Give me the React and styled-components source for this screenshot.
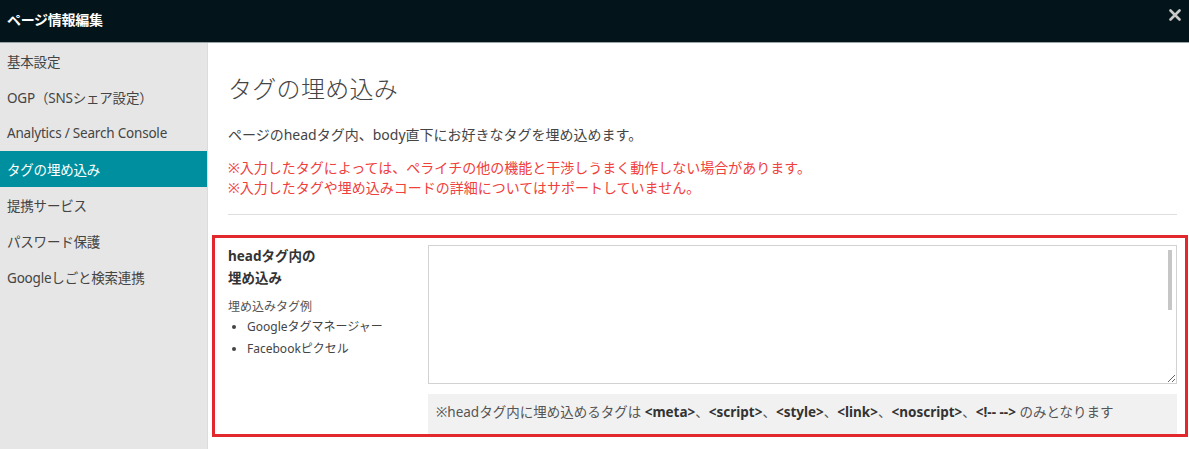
import React from 'react'
import styled, { createGlobalStyle } from 'styled-components'

const GlobalStyle = createGlobalStyle`
  html, body {
    margin: 0;
    padding: 0;
    background: #fff;
  }
  body {
    font-family: "Noto Sans", "Noto Sans CJK JP", sans-serif;
    color: #333;
  }
  * {
    box-sizing: border-box;
  }
`

const menuItems = [
  '基本設定',
  'OGP（SNSシェア設定）',
  'Analytics / Search Console',
  'タグの埋め込み',
  '提携サービス',
  'パスワード保護',
  'Googleしごと検索連携',
]

const App = () => {
  return (
    <Modal>
      <GlobalStyle />
      <Header>
        <Title>ページ情報編集</Title>
        <CloseButton aria-label="閉じる">
          <svg width="12" height="12" viewBox="0 0 12 12">
            <path d="M1.5 1.5 L10.5 10.5 M10.5 1.5 L1.5 10.5" stroke="#c8c8c8" strokeWidth="2.6" strokeLinecap="round" />
          </svg>
        </CloseButton>
      </Header>
      <Body>
        <SideBar>
          {menuItems.map((item) => (
            <MenuItem key={item} active={item === 'タグの埋め込み'}>
              {item}
            </MenuItem>
          ))}
        </SideBar>
        <Content>
          <PageTitle>タグの埋め込み</PageTitle>
          <Lead>ページのheadタグ内、body直下にお好きなタグを埋め込めます。</Lead>
          <Warning>
            ※入力したタグによっては、ペライチの他の機能と干渉しうまく動作しない場合があります。
            <br />
            ※入力したタグや埋め込みコードの詳細についてはサポートしていません。
          </Warning>
          <Divider />
          <FormRow>
            <LabelColumn>
              <FieldLabel>
                headタグ内の
                <br />
                埋め込み
              </FieldLabel>
              <ExampleTitle>埋め込みタグ例</ExampleTitle>
              <ExampleList>
                <li>Googleタグマネージャー</li>
                <li>Facebookピクセル</li>
              </ExampleList>
            </LabelColumn>
            <FieldColumn>
              <InputWrap>
                <TagInput />
                <ScrollThumb />
              </InputWrap>
              <Note>
                ※headタグ内に埋め込めるタグは <b>&lt;meta&gt;</b>、<b>&lt;script&gt;</b>、<b>&lt;style&gt;</b>、<b>&lt;link&gt;</b>、<b>&lt;noscript&gt;</b>、<b>&lt;!-- --&gt;</b> のみとなります
              </Note>
            </FieldColumn>
          </FormRow>
        </Content>
      </Body>
    </Modal>
  )
}

export default App

const Modal = styled.div`
  width: 1189px;
  height: 449px;
  display: flex;
  flex-direction: column;
  overflow: hidden;
`

const Header = styled.header`
  height: 43px;
  flex: none;
  background: #03151a;
  border-bottom: 1px solid #9aa3a5;
  display: flex;
  align-items: center;
  justify-content: space-between;
  padding: 0 8px 4px 7px;
`

const Title = styled.h1`
  margin: 0;
  color: #fff;
  font-size: 14px;
  font-weight: 700;
  letter-spacing: -0.3px;
`

const CloseButton = styled.button`
  border: none;
  background: none;
  padding: 0;
  margin-top: -8px;
  display: flex;
  cursor: pointer;
`

const Body = styled.div`
  flex: 1;
  display: flex;
  min-height: 0;
`

const SideBar = styled.nav`
  width: 208px;
  flex: none;
  background: #e6e6e6;
  border-right: 1px solid #dcdcdc;
`

const MenuItem = styled.div`
  height: 36px;
  display: flex;
  align-items: center;
  padding-left: 7px;
  font-size: 13.5px;
  letter-spacing: -0.2px;
  color: ${(p) => (p.active ? '#fff' : '#444')};
  background: ${(p) => (p.active ? '#008f9e' : 'transparent')};
`

const Content = styled.main`
  flex: 1;
  padding: 28px 12px 0 20px;
  min-width: 0;
`

const PageTitle = styled.h2`
  margin: 0;
  font-size: 24px;
  line-height: 36px;
  font-weight: 300;
  color: #444;
  letter-spacing: 0.3px;
`

const Lead = styled.p`
  margin: 18px 0 0;
  font-size: 14px;
  line-height: 20px;
  color: #444;
`

const Warning = styled.p`
  margin: 13px 0 0;
  font-size: 14px;
  line-height: 20px;
  color: #f0403c;
`

const Divider = styled.hr`
  margin: 16px 0 0;
  border: none;
  border-top: 1px solid #dedede;
`

const FormRow = styled.section`
  margin: 20px -11px 0 -16px;
  border: 3px solid #e3282d;
  display: flex;
  gap: 16px;
  padding: 7px 8px 0 13px;
  height: 202px;
  overflow: hidden;
`

const LabelColumn = styled.div`
  width: 184px;
  flex: none;
`

const FieldLabel = styled.h3`
  margin: 0;
  font-size: 13.5px;
  line-height: 22px;
  font-weight: 700;
  color: #333;
`

const ExampleTitle = styled.p`
  margin: 8px 0 0;
  font-size: 12px;
  line-height: 20px;
  color: #555;
`

const ExampleList = styled.ul`
  margin: -1px 0 0;
  padding-left: 19px;
  font-size: 12px;
  line-height: 22px;
  color: #444;

  li::marker {
    font-size: 11px;
  }
`

const FieldColumn = styled.div`
  flex: 1;
  min-width: 0;
  display: flex;
  flex-direction: column;
  gap: 10px;
`

const InputWrap = styled.div`
  position: relative;
  height: 140px;
`

const TagInput = styled.textarea`
  width: 100%;
  height: 100%;
  border: 1px solid #d2d2d2;
  padding: 4px 16px 4px 4px;
  font-size: 13px;
  overflow: hidden;
  display: block;
`

const ScrollThumb = styled.div`
  position: absolute;
  top: 5px;
  right: 5px;
  width: 4px;
  height: 60px;
  background: #c6c6c6;
`

const Note = styled.div`
  background: #f1f1f1;
  padding: 10px 8px 14px;
  font-size: 13.5px;
  line-height: 16px;
  color: #555;
  white-space: nowrap;

  b {
    color: #333;
  }
`
